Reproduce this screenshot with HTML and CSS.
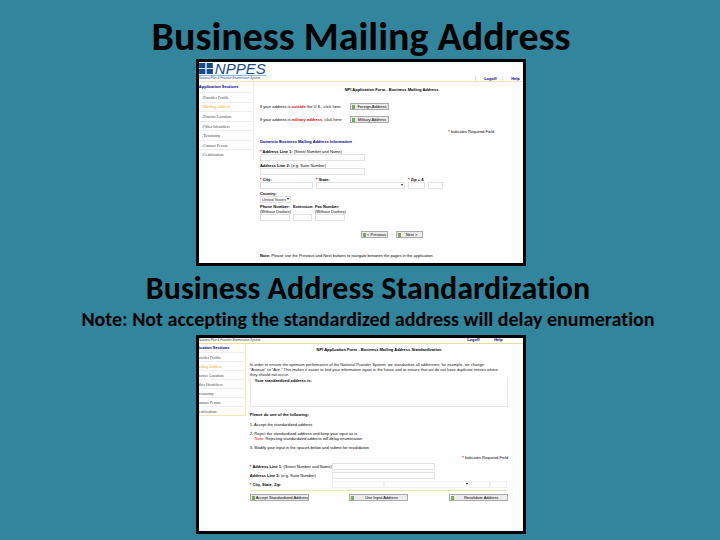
FILE: index.html
```html
<!DOCTYPE html>
<html lang="en">
<head>
    <meta charset="UTF-8">
    <meta name="viewport" content="width=device-width, initial-scale=1.0">
    <title>Business Mailing Address</title>
    <link rel="stylesheet" href="styles.css">
</head>
<body>

<h1>Business Mailing Address</h1>

<section class="frame mailing">
    <header class="top">
        <div class="brand">
            <div class="logo">
                <svg viewBox="0 0 15 12" aria-hidden="true">
                    <path fill="#174a8c" d="M0 0h7v5.500H0zM8 0h7v5.500H8zM0 6.500h7v5.500H0zM8 6.500h7v5.500H8z"/>
                    <path stroke="#dbe9f5" d="M7.500 0v12M0 6h15"/>
                </svg>
                <span>NPPES</span>
            </div>
            <p class="tagline">National Plan &amp; Provider Enumeration System</p>
        </div>
        <nav class="links">
            <a href="#">Logoff</a>
            <a href="#">Help</a>
        </nav>
    </header>
    <div class="columns">
        <aside class="sidebar">
            <h2>Application Sections</h2>
            <ul>
                <li><a href="#">&rsaquo;Provider Profile</a></li>
                <li><a href="#" class="current">&rsaquo;Mailing Address</a></li>
                <li><a href="#">&rsaquo;Practice Location</a></li>
                <li><a href="#">&rsaquo;Other Identifiers</a></li>
                <li><a href="#">&rsaquo;Taxonomy</a></li>
                <li><a href="#">&rsaquo;Contact Person</a></li>
                <li><a href="#">&rsaquo;Certification</a></li>
            </ul>
        </aside>
        <form class="content">
            <h3>NPI Application Form - Business Mailing Address</h3>
            <div class="choice">
                <span>If your address is <b class="red">outside</b> the U.S., click here:</span>
                <button type="button"><i class="mark"></i>Foreign Address</button>
            </div>
            <div class="choice">
                <span>If your address is <b class="red">military address</b>, click here:</span>
                <button type="button"><i class="mark"></i>Military Address</button>
            </div>
            <p class="required"><b class="red">*</b> Indicates Required Field</p>
            <h4>Domestic Business Mailing Address Information</h4>
            <div class="field line">
                <label for="line1"><b><span class="red">*</span> Address Line 1:</b> (Street Number and Name)</label>
                <input type="text" id="line1">
            </div>
            <div class="field line">
                <label for="line2"><b>Address Line 2:</b> (e.g. Suite Number)</label>
                <input type="text" id="line2">
            </div>
            <div class="place">
                <div class="field">
                    <label for="city"><b><span class="red">*</span> City:</b></label>
                    <input type="text" id="city">
                </div>
                <div class="field">
                    <label for="state"><b><span class="red">*</span> State:</b></label>
                    <div class="drop"><select id="state"><option></option></select></div>
                </div>
                <div class="field">
                    <label for="zip"><b><span class="red">*</span> Zip + 4</b></label>
                    <input type="text" id="zip">
                </div>
                <div class="field">
                    <input type="text" id="zip4" aria-label="Zip extension">
                </div>
            </div>
            <div class="field country">
                <label for="country"><b>Country:</b></label>
                <div class="drop"><select id="country"><option>United States</option></select></div>
            </div>
            <div class="phones">
                <div class="field">
                    <label for="phone"><b>Phone Number:</b><br>(Without Dashes)</label>
                    <input type="text" id="phone">
                </div>
                <div class="field">
                    <label for="ext"><b>Extension:</b></label>
                    <input type="text" id="ext">
                </div>
                <div class="field">
                    <label for="fax"><b>Fax Number:</b><br>(Without Dashes)</label>
                    <input type="text" id="fax">
                </div>
            </div>
            <div class="pager">
                <button type="button"><i class="mark"></i>&lt; Previous</button>
                <button type="button"><i class="mark"></i>Next &gt;</button>
            </div>
            <p><b>Note:</b> Please use the Previous and Next buttons to navigate between the pages in the application.</p>
        </form>
    </div>
</section>

<div class="caption">
    <h1>Business Address Standardization</h1>
    <p>Note: Not accepting the standardized address will delay enumeration</p>
</div>

<section class="frame standard">
    <header class="top">
        <p class="tagline">National Plan &amp; Provider Enumeration System</p>
        <nav class="links">
            <a href="#">Logoff</a>
            <a href="#">Help</a>
        </nav>
    </header>
    <div class="columns">
        <aside class="sidebar">
            <h2>ication Sections</h2>
            <ul>
                <li><a href="#">ovider Profile</a></li>
                <li><a href="#" class="current">ailing Address</a></li>
                <li><a href="#">actice Location</a></li>
                <li><a href="#">ther Identifiers</a></li>
                <li><a href="#">axonomy</a></li>
                <li><a href="#">ontact Person</a></li>
                <li><a href="#">ertification</a></li>
            </ul>
        </aside>
        <form class="content">
            <h3>NPI Application Form - Business Mailing Address Standardization</h3>
            <p class="intro">In order to ensure the optimum performance of the National Provider System, we standardize all addresses; for example, we change<br>"Avenue" to "Ave." This makes it easier to find your information again in the future and to ensure that we do not have duplicate entries where<br>they should not occur.</p>
            <div class="result"><b>Your standardized address is:</b></div>
            <p class="ask"><b>Please do one of the following:</b></p>
            <p class="step">1. Accept the standardized address</p>
            <p class="step">2. Reject the standardized address and keep your input as is<br><span class="red note">Note:</span> Rejecting standardized address will delay enumeration</p>
            <p class="step">3. Modify your input in the spaces below and submit for revalidation</p>
            <p class="required"><b class="red">*</b> Indicates Required Field</p>
            <div class="row">
                <label for="std1"><b><span class="red">*</span> Address Line 1:</b> (Street Number and Name)</label>
                <input type="text" id="std1">
            </div>
            <div class="row">
                <label for="std2"><b>Address Line 2:</b> (e.g. Suite Number)</label>
                <input type="text" id="std2">
            </div>
            <div class="row region">
                <label for="std-city"><b><span class="red">*</span> City, State, Zip:</b></label>
                <input type="text" id="std-city">
                <div class="drop"><select aria-label="State"><option></option></select></div>
                <input type="text" aria-label="Zip">
                <input type="text" aria-label="Zip extension">
            </div>
            <div class="actions">
                <button type="button"><i class="mark"></i>Accept Standardized Address</button>
                <button type="button"><i class="mark"></i>Use Input Address</button>
                <button type="button"><i class="mark"></i>Revalidate Address</button>
            </div>
        </form>
    </div>
</section>

</body>
</html>
```
FILE: styles.css
```css
* {
    box-sizing: border-box;
}

body {
    margin: 0;
    padding: 15px 0 0 2px;
    background-color: #31859c;
    color: #000;
    font-family: Carlito, Lato, sans-serif;
    font-variant-ligatures: none;
}

h1, h2, h3, h4, p, ul {
    margin: 0;
    padding: 0;
}

h1 {
    font-size: 40px;
    line-height: 44px;
    text-align: center;
}

.caption {
    padding: 4px 0 4px 14px;
    text-align: center;
    font-weight: bold;
}

.caption h1 {
    font-size: 32px;
    line-height: 37px;
}

.caption p {
    font-size: 20px;
    line-height: 24px;
}

.frame {
    width: 46%;
    margin: 0 auto;
    border: 3px solid #000;
    background-color: #fff;
    overflow: hidden;
    font-family: "Liberation Sans", Arial, sans-serif;
    font-size: 4px;
    line-height: 5px;
}

.mailing {
    padding-bottom: 5px;
}

.standard {
    padding-bottom: 30px;
}

/* header */

.top {
    display: flex;
    justify-content: space-between;
    align-items: flex-end;
    height: 20px;
    border-bottom: 1px solid #f6e3bd;
}

.standard .top {
    align-items: flex-start;
    height: 6px;
    border-color: #eadf9a;
}

.logo {
    display: flex;
    align-items: center;
    gap: 2px;
    height: 13px;
    color: #174a8c;
    font-size: 15px;
    font-style: italic;
    line-height: 13px;
}

.logo svg {
    width: 14px;
    height: 11px;
}

.tagline {
    color: #174a8c;
    font-size: 3px;
    font-style: italic;
    line-height: 5px;
    border-top: 1px solid #8fb6d8;
}

.standard .tagline {
    border: none;
    color: #333;
}

.links {
    display: flex;
    padding-right: 1px;
}

.standard .links {
    padding-right: 18px;
    line-height: 4px;
}

.links a {
    width: 27px;
    padding-left: 8px;
    border-left: 1px solid #e3e3e3;
    color: #00008b;
    font-weight: bold;
    text-decoration: none;
}

.links a:last-child {
    width: 20px;
}

.standard .links a {
    border-left-color: #fff;
}

/* sidebar */

.columns {
    display: flex;
}

.sidebar {
    flex: 0 0 17%;
    align-self: flex-start;
    border-right: 1px solid #eee;
    font-family: "Liberation Serif", serif;
}

.standard .sidebar {
    flex-basis: 47px;
    border-color: #f3e6b5;
    border-bottom: 1px solid #f3e6b5;
}

.sidebar h2 {
    color: #00008b;
    font-family: "Liberation Sans", Arial, sans-serif;
    font-size: 4px;
    line-height: 10px;
    white-space: nowrap;
}

.sidebar ul {
    display: flex;
    flex-direction: column;
    height: 67px;
    list-style: none;
}

.standard .sidebar h2 {
    line-height: 8px;
}

.standard .sidebar ul {
    height: 63px;
}

.sidebar li {
    flex: 1;
    display: flex;
    align-items: center;
    padding-left: 3px;
    border-top: 1px solid #eee;
}

.standard .sidebar li {
    padding-left: 0;
}

.sidebar a {
    color: #444;
    text-decoration: none;
}

.sidebar .current {
    color: #eda800;
}

/* forms */

.content {
    flex: 1;
    min-width: 0;
    padding: 5px 29px 0 6px;
}

.standard .content {
    padding: 3px 15px 0 4px;
}

.content h3 {
    font-size: 4px;
    line-height: 6px;
    text-align: center;
}

.content h4 {
    margin: 5px 0;
    color: #00008b;
    font-size: 4px;
    line-height: 5px;
}

.mailing h3 {
    margin: 0 -29px 10px 0;
}

.red {
    color: #e00000;
}

button {
    display: flex;
    align-items: center;
    justify-content: center;
    position: relative;
    height: 7px;
    padding: 0 0 0 5px;
    border: 1px solid #aaa;
    background-color: #ececec;
    color: #000;
    font-family: inherit;
    font-size: 4px;
    line-height: 5px;
    white-space: nowrap;
}

.mark {
    position: absolute;
    left: 1px;
    width: 3px;
    height: 4px;
    background-color: #7ca65c;
}

.choice {
    display: flex;
    align-items: center;
    margin-top: 6px;
}

.choice span {
    flex: 0 0 90px;
}

.choice button {
    width: 39px;
}

.required {
    text-align: right;
}

.mailing .required {
    margin-top: 6px;
}

input, select {
    display: block;
    width: 100%;
    height: 7px;
    margin: 0;
    padding: 0 1px;
    border: 1px solid #e2e2e2;
    border-radius: 0;
    background-color: #fff;
    color: #333;
    font-family: inherit;
    font-size: 4px;
    line-height: 5px;
}

select {
    appearance: none;
}

.drop {
    position: relative;
}

.drop::after {
    content: "";
    position: absolute;
    right: 2px;
    top: 2px;
    border: 1px solid transparent;
    border-top: 2px solid #222;
}

.field label {
    display: block;
    white-space: nowrap;
}

.line {
    width: 105px;
    margin-bottom: 2px;
}

.place {
    display: grid;
    grid-template-columns: 53px 89px 17px 15px;
    gap: 3px;
    align-items: end;
    margin-bottom: 2px;
}

.country {
    width: 31px;
}

.phones {
    display: grid;
    grid-template-columns: 30px 19px 30px;
    gap: 3px;
    margin-top: 1px;
}

.phones .field {
    display: flex;
    flex-direction: column;
    justify-content: space-between;
}

.pager {
    display: flex;
    justify-content: center;
    gap: 8px;
    margin: 10px -29px 15px 0;
}

.pager button {
    width: 27px;
}

/* standardization page */

.intro {
    margin: 9px 0 1px;
    color: #111;
    white-space: nowrap;
}

.result {
    height: 29px;
    padding-left: 4px;
    border: 1px solid #e8e8e8;
    border-top: none;
}

.ask {
    margin: 5px 0;
}

.step {
    margin-bottom: 4px;
}

.note {
    margin-left: 5px;
}

.standard .required {
    margin: 5px 0 3px;
}

.row {
    display: grid;
    grid-template-columns: 82px 103px;
    align-items: center;
    margin-bottom: 2px;
    white-space: nowrap;
}

.region {
    grid-template-columns: 82px 52px 86px 20px 17px;
}

.region input, .region select {
    border-color: #f0f0f0;
}

.actions {
    display: flex;
    justify-content: space-between;
    padding-top: 3px;
    border-top: 1px solid #dfe6b8;
}

.actions button {
    width: 59px;
}
```
